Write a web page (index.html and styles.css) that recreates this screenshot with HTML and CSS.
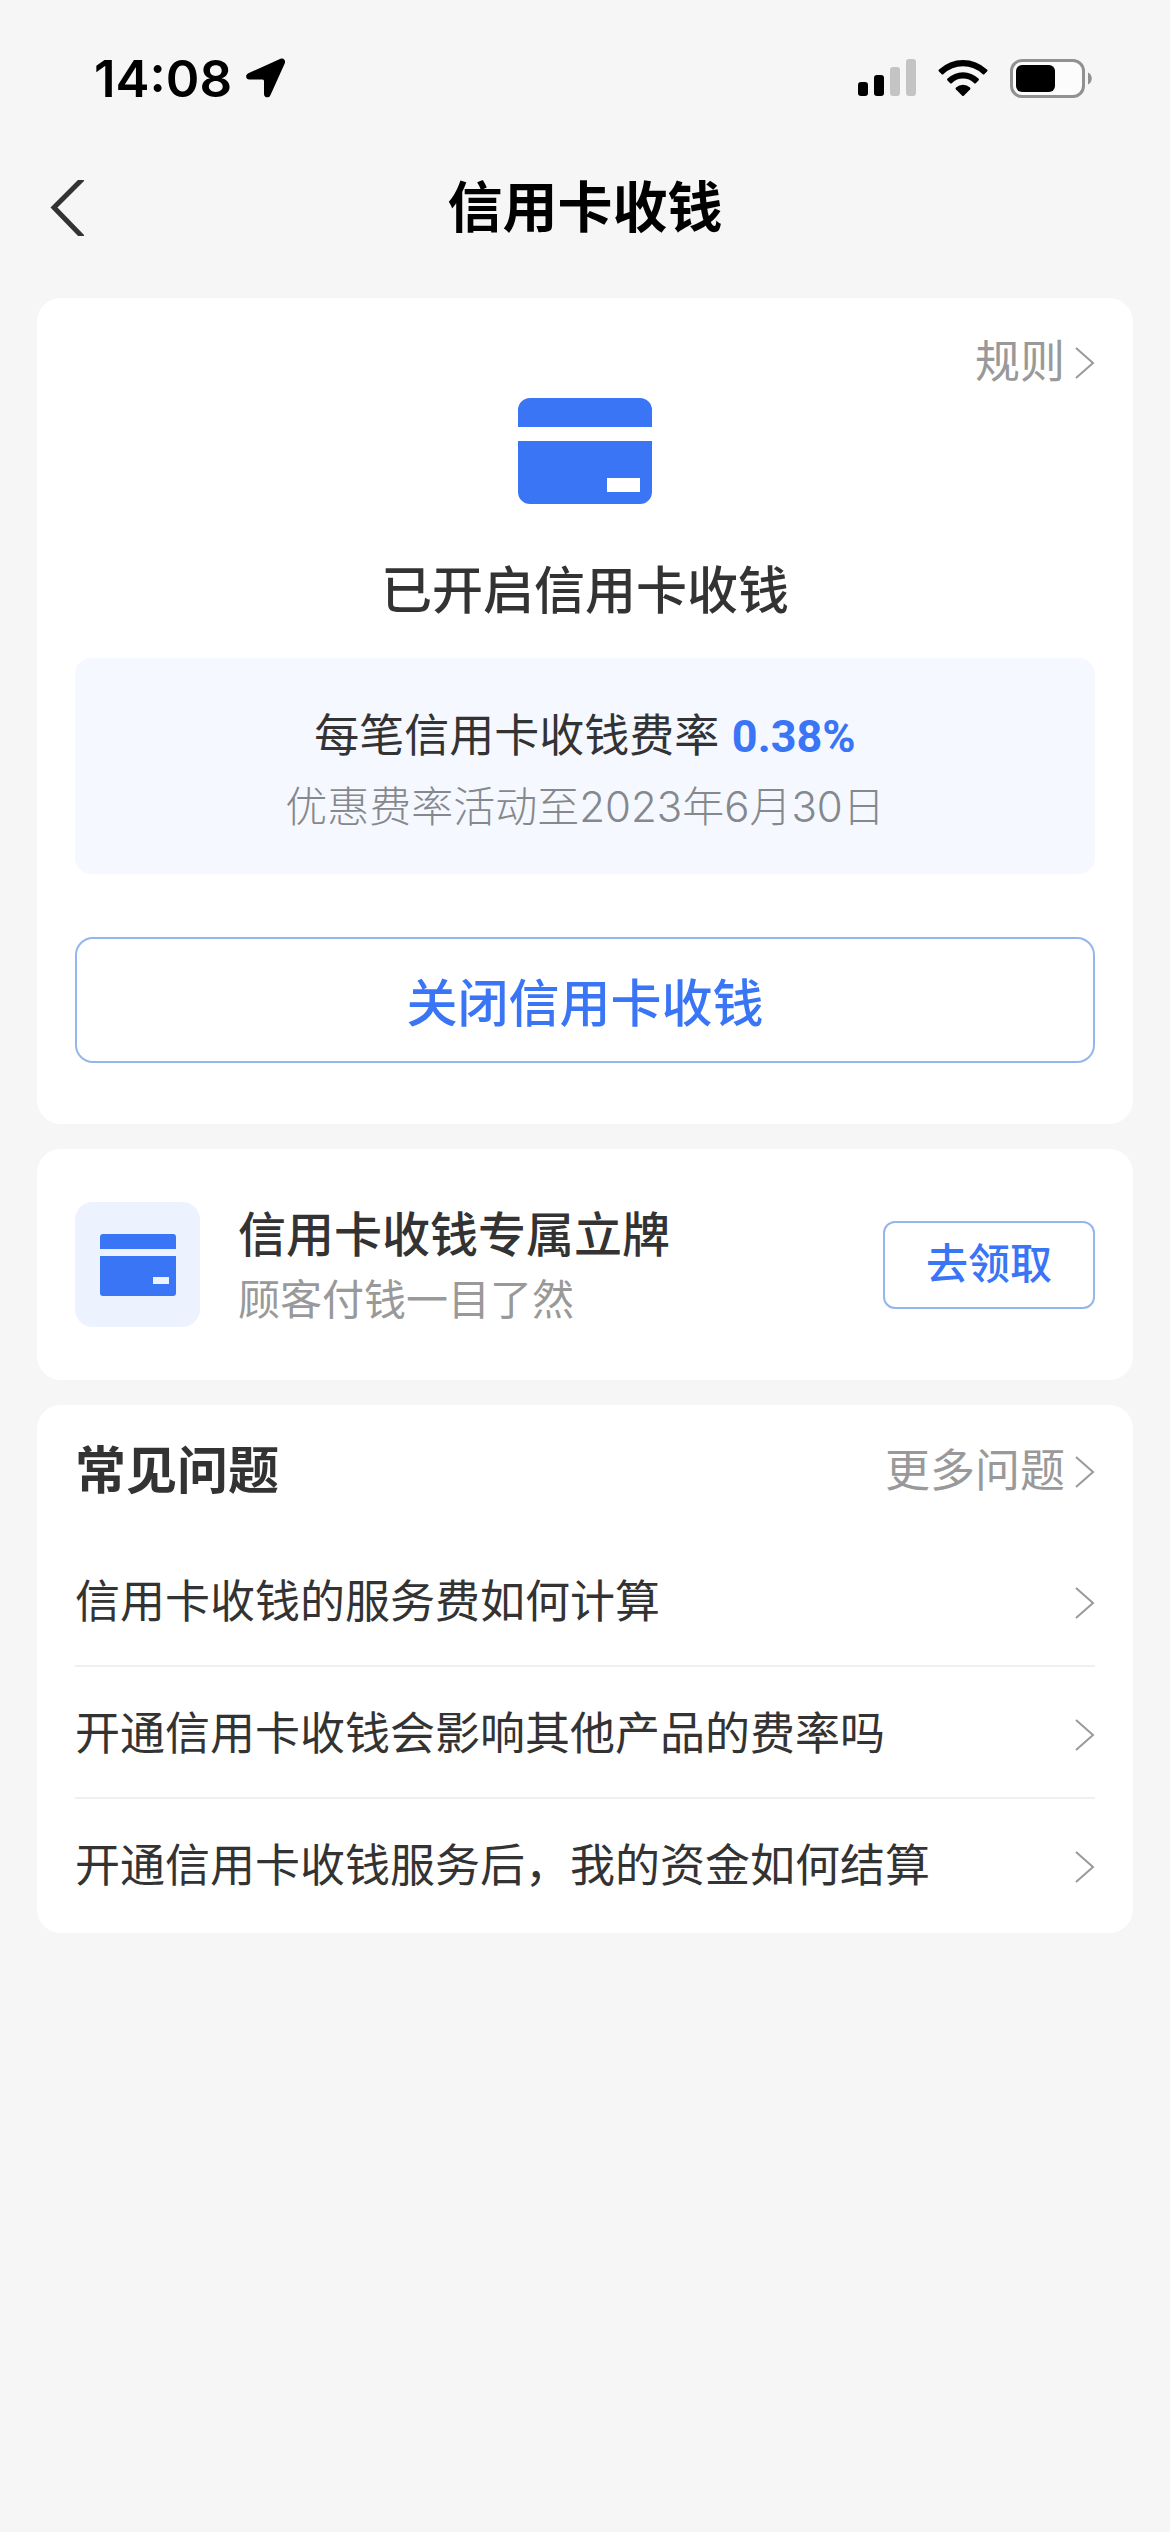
FILE: index.html
```html
<!DOCTYPE html>
<html lang="zh-CN">
<head>
<meta charset="utf-8">
<meta name="viewport" content="width=device-width, initial-scale=1">
<title>信用卡收钱</title>
<link rel="stylesheet" href="styles.css">
</head>
<body>
<div class="status">
  <div class="status-left">
    <span class="time">14:08</span>
    <svg width="40" height="40" viewBox="0 0 40 40"><path d="M34.500.8 2.300 15.200C-1 16.800-.3 21.500 3.200 21.500H16.500a1.500 1.500 0 0 1 1.500 1.500V36c0 3.800 4.800 4.600 6.400 1.200L38.700 5.500C40 2.500 37.500-.5 34.500.8z"/></svg>
  </div>
  <div class="status-right">
    <svg width="58" height="38" viewBox="0 0 58 38"><rect x="0" y="23" width="10" height="14" rx="3"/><rect x="16" y="16" width="10" height="21" rx="3"/><rect x="32" y="8" width="10" height="29" rx="3" fill="#c4c4c4"/><rect x="48" y="0" width="10" height="37" rx="3" fill="#c4c4c4"/></svg>
    <svg width="50" height="38" viewBox="0 0 50 38"><path d="M1 10.500a35 35 0 0 1 48 0q1 1 0 2l-2.500 2.500q-1 1-2 0a28.500 28.500 0 0 0-39 0q-1 1-2 0L1 12.500q-1-1 0-2z"/><path d="M9.500 19.500a22.500 22.500 0 0 1 31 0q1 1 0 2L38 24q-1 1-2 0a16 16 0 0 0-22 0q-1 1-2 0l-2.500-2.500q-1-1 0-2z"/><path d="M18 28.500a10.500 10.500 0 0 1 14 0q1 1 0 2L26 36.500q-1 1-2 0l-6-6q-1-1 0-2z"/></svg>
    <svg width="82" height="39" viewBox="0 0 82 39"><rect x="1.500" y="1.500" width="72" height="36" rx="10.500" fill="#fcfcfc" stroke="#919191" stroke-width="3"/><rect x="6" y="6" width="39" height="27" rx="6"/><path d="M78 13.500c5 2 5 10 0 12z" fill="#919191"/></svg>
  </div>
</div>
<header class="nav">
  <button class="back" aria-label="返回"><svg width="36" height="56" viewBox="0 0 36 56" fill="none" stroke="#333" stroke-width="5"><path d="M32.500-1 4 27.500 32.500 57"/></svg></button>
  <h1>信用卡收钱</h1>
</header>
<main>
  <section class="card hero">
    <a class="more" href="#">规则<svg class="chev" viewBox="0 0 20 34"><path d="M1 2l17 15L1 32"/></svg></a>
    <svg class="hero-icon" viewBox="0 0 134 106"><path d="M12 0h110a12 12 0 0 1 12 12v17H0V12A12 12 0 0 1 12 0zM0 43h134v51a12 12 0 0 1-12 12H12A12 12 0 0 1 0 94z"/><path d="M89 80h33v14H89z" fill="#fff"/></svg>
    <h2>已开启信用卡收钱</h2>
    <div class="rate">
      <p class="rate-main">每笔信用卡收钱费率 <strong>0.38%</strong></p>
      <p class="rate-note">优惠费率活动至2023年6月30日</p>
    </div>
    <button class="close">关闭信用卡收钱</button>
  </section>
  <section class="card stand">
    <div class="stand-icon"><svg width="76" height="62" viewBox="0 0 76 62"><path d="M3 0h70a3 3 0 0 1 3 3v12H0V3a3 3 0 0 1 3-3zM0 22h76v37a3 3 0 0 1-3 3H3a3 3 0 0 1-3-3z"/><path d="M53 43h16v7H53z" fill="#ecf2fe"/></svg></div>
    <div class="stand-text"><h3>信用卡收钱专属立牌</h3><p>顾客付钱一目了然</p></div>
    <button class="get">去领取</button>
  </section>
  <section class="card faq">
    <div class="faq-head"><h3>常见问题</h3><a class="more" href="#">更多问题<svg class="chev" viewBox="0 0 20 34"><path d="M1 2l17 15L1 32"/></svg></a></div>
    <ul>
      <li><a href="#">信用卡收钱的服务费如何计算<svg class="chev" viewBox="0 0 20 34"><path d="M1 2l17 15L1 32"/></svg></a></li>
      <li><a href="#">开通信用卡收钱会影响其他产品的费率吗<svg class="chev" viewBox="0 0 20 34"><path d="M1 2l17 15L1 32"/></svg></a></li>
      <li><a href="#">开通信用卡收钱服务后，我的资金如何结算<svg class="chev" viewBox="0 0 20 34"><path d="M1 2l17 15L1 32"/></svg></a></li>
    </ul>
  </section>
</main>
</body>
</html>
```
FILE: styles.css
```css
* { box-sizing: border-box; margin: 0; padding: 0; }
body { background: #f6f6f6; color: #333; font-family: "Liberation Sans", "Noto Sans CJK SC", sans-serif; }
svg { flex: none; }
a { color: inherit; text-decoration: none; }
button { font: inherit; background: none; border: 0; }

.status { display: flex; justify-content: space-between; align-items: center; height: 156px; padding: 0 78px 0 94px; }
.status-left { display: flex; align-items: center; gap: 14px; }
.status-right { display: flex; align-items: center; gap: 22px; }
.time { font-family: Inter, "Liberation Sans", sans-serif; font-size: 51px; font-weight: 600; color: #000; }

.nav { display: grid; grid-template-columns: 36px 1fr 36px; align-items: center; height: 104px; padding: 0 50px; }
.back { display: flex; }
.nav h1 { text-align: center; font-size: 55px; font-weight: 700; color: #000; line-height: 72px; }

main { display: flex; flex-direction: column; gap: 25px; padding: 38px 37px 60px; }
.card { background: #fff; border-radius: 24px; padding: 0 38px; }
.chev { width: 20px; height: 34px; fill: none; stroke: #999; stroke-width: 2; }
.more { display: flex; align-items: center; gap: 10px; font-size: 45px; line-height: 64px; color: #999; }

.hero { display: flex; flex-direction: column; align-items: center; padding-top: 33px; padding-bottom: 61px; }
.hero .more { align-self: flex-end; }
.hero-icon { width: 134px; height: 106px; margin-top: 3px; fill: #3a75f6; }
.hero h2 { margin-top: 54px; font-size: 51px; font-weight: 500; line-height: 68px; }
.rate { align-self: stretch; margin-top: 32px; padding: 44px 0 32px; border-radius: 16px; background: #f5f8ff; text-align: center; }
.rate-main { font-size: 45px; line-height: 70px; }
.rate-main strong { color: #3a75f6; font-family: Roboto, sans-serif; font-weight: 700; }
.rate-note { font-family: Inter, "Noto Sans CJK SC", sans-serif; font-size: 42px; font-weight: 300; line-height: 70px; color: #85888c; }
.close { align-self: stretch; height: 126px; margin-top: 63px; border: 2px solid #94b6ec; border-radius: 18px; color: #3a75f6; font-size: 51px; font-weight: 500; }

.stand { display: flex; align-items: center; gap: 38px; height: 231px; }
.stand-icon { display: grid; place-items: center; width: 125px; height: 125px; border-radius: 18px; background: #ecf2fe; fill: #3a75f6; }
.stand-text { flex: 1; padding-top: 6px; }
.stand-text h3 { font-size: 48px; font-weight: 500; line-height: 66px; }
.stand-text p { font-size: 42px; line-height: 64px; color: #999; }
.get { width: 212px; height: 88px; border: 2px solid #94b6ec; border-radius: 12px; color: #3a75f6; font-size: 42px; font-weight: 500; line-height: 64px; }

.faq { padding-bottom: 4px; }
.faq-head { display: flex; justify-content: space-between; align-items: center; height: 130px; padding-top: 4px; }
.faq-head h3 { font-size: 51px; font-weight: 700; line-height: 68px; }
.faq ul { list-style: none; }
.faq li a { display: flex; justify-content: space-between; align-items: center; height: 130px; padding-top: 6px; font-size: 45px; line-height: 64px; }
.faq li + li { border-top: 2px solid #f0f0f0; }
```
